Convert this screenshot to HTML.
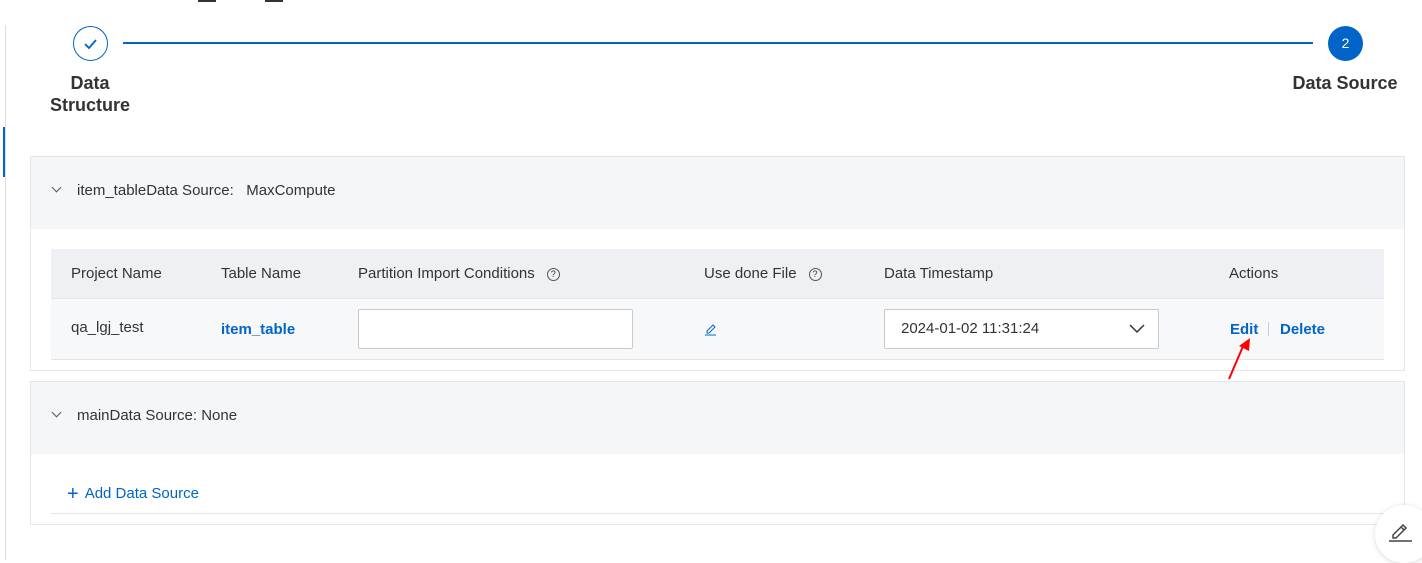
<!DOCTYPE html>
<html><head><meta charset="utf-8"><style>
*{box-sizing:border-box;margin:0;padding:0}
body{width:1422px;height:560px;background:#fff;font-family:"Liberation Sans",sans-serif;color:#333;position:relative;overflow:hidden;font-size:14px}
.abs{position:absolute}
.step{font-weight:bold;font-size:18px;color:#333;text-align:center;line-height:22px}
.panel{position:absolute;left:30px;width:1375px;border:1px solid #e3e5e8}
.ph{height:72px;background:#f5f6f8;display:flex;align-items:center;padding-left:22px;padding-bottom:6px;font-size:15px;color:#333}
.ph .car{width:7px;height:7px;border-right:1.3px solid #555;border-bottom:1.3px solid #555;transform:rotate(45deg);margin-right:17px;margin-top:-5px}
.th{position:absolute;top:0;font-size:15px;color:#333;line-height:49px}
.q{display:inline-block;width:13px;height:13px;border:1px solid #555;border-radius:50%;font-size:9px;line-height:11px;text-align:center;margin-left:12px;vertical-align:middle}
.td{position:absolute;font-size:15px;line-height:61px;top:0}
</style></head><body>
<div class="abs" style="left:198px;top:0;width:18px;height:2px;background:#333"></div>
<div class="abs" style="left:265px;top:0;width:18px;height:2px;background:#333"></div>
<div class="abs" style="left:5px;top:25px;width:1px;height:535px;background:#ddd"></div>
<div class="abs" style="left:3px;top:127px;width:2px;height:50px;background:#0064c8"></div>

<div class="abs" style="left:73px;top:26px;width:35px;height:35px;border:1.3px solid #0064c8;border-radius:50%"></div>
<svg class="abs" style="left:82px;top:35px" width="17" height="17" viewBox="0 0 17 17"><path d="M3 9l4 4 7-8" fill="none" stroke="#0064c8" stroke-width="1.8"/></svg>
<div class="abs" style="left:123px;top:42px;width:1190px;height:2px;background:#0064c8"></div>
<div class="abs" style="left:1328px;top:26px;width:35px;height:35px;border-radius:50%;background:#0064c8;color:#fff;font-size:14px;text-align:center;line-height:35px">2</div>
<div class="abs step" style="left:40px;top:72px;width:100px">Data<br>Structure</div>
<div class="abs step" style="left:1285px;top:72px;width:120px">Data Source</div>

<div class="panel" style="top:156px;height:215px">
 <div class="ph"><div class="car"></div>item_tableData Source:&nbsp;&nbsp; MaxCompute</div>
 <div class="abs" style="left:20px;top:92px;width:1333px;height:50px;background:#eef0f4;border-bottom:1px solid #e3e5e8">
  <div class="th" style="left:20px">Project Name</div>
  <div class="th" style="left:170px">Table Name</div>
  <div class="th" style="left:307px">Partition Import Conditions<span class="q">?</span></div>
  <div class="th" style="left:653px">Use done File<span class="q">?</span></div>
  <div class="th" style="left:833px">Data Timestamp</div>
  <div class="th" style="left:1178px">Actions</div>
 </div>
 <div class="abs" style="left:20px;top:142px;width:1333px;height:61px;background:#f7f8fa;border-bottom:1px solid #e3e5e8">
  <div class="td" style="left:20px;line-height:58px">qa_lgj_test</div>
  <div class="td" style="left:170px;color:#0064c8;font-weight:bold">item_table</div>
  <div class="abs" style="left:307px;top:10px;width:275px;height:40px;background:#fff;border:1px solid #c8cacd;border-radius:2px"></div>
  <svg class="abs" style="left:653px;top:22px" width="14" height="16" viewBox="0 0 14 16"><path d="M3 10l6-6 2 2-6 6H3z" fill="none" stroke="#0064c8" stroke-width="1"/><path d="M1 14h11" stroke="#0064c8" stroke-width="1"/></svg>
  <div class="abs" style="left:833px;top:10px;width:275px;height:40px;background:#fff;border:1px solid #c8cacd;border-radius:2px;padding-left:16px;line-height:38px;font-size:15px">2024-01-02 11:31:24
   <svg class="abs" style="left:244px;top:14px" width="16" height="10" viewBox="0 0 16 10"><path d="M1 1l7 7 7-7" fill="none" stroke="#333" stroke-width="1.5"/></svg></div>
  <div class="td" style="left:1179px;color:#0064c8;font-weight:bold">Edit</div>
  <div class="abs" style="left:1217px;top:23px;width:1px;height:14px;background:#ccc"></div>
  <div class="td" style="left:1229px;color:#0064c8;font-weight:bold">Delete</div>
 </div>
</div>
<svg class="abs" style="left:1225px;top:336px" width="30" height="45" viewBox="0 0 30 45"><path d="M4 43L19 8" stroke="#f00" stroke-width="2"/><path d="M14 10l11-8-1 13z" fill="#f00"/></svg>

<div class="panel" style="top:381px;height:144px">
 <div class="ph"><div class="car"></div>mainData Source: None</div>
 <div class="abs" style="left:36px;top:101px;color:#0064c8;font-size:15px"><span style="font-size:20px;vertical-align:-2px;margin-right:6px">+</span>Add Data Source</div>
 <div class="abs" style="left:20px;top:131px;width:1333px;height:1px;background:#e3e5e8"></div>
</div>

<div class="abs" style="left:1375px;top:505px;width:58px;height:58px;border-radius:50%;background:#fff;box-shadow:0 1px 6px rgba(0,0,0,.15)"></div>
<svg class="abs" style="left:1387px;top:517px" width="26" height="26" viewBox="0 0 26 26"><path d="M6 18l10-10 3 3-10 10H6z" fill="none" stroke="#444" stroke-width="1.5"/><path d="M14 10l3 3" stroke="#444" stroke-width="1.5"/><path d="M2 24h23" stroke="#444" stroke-width="1.5"/></svg>
</body></html>
